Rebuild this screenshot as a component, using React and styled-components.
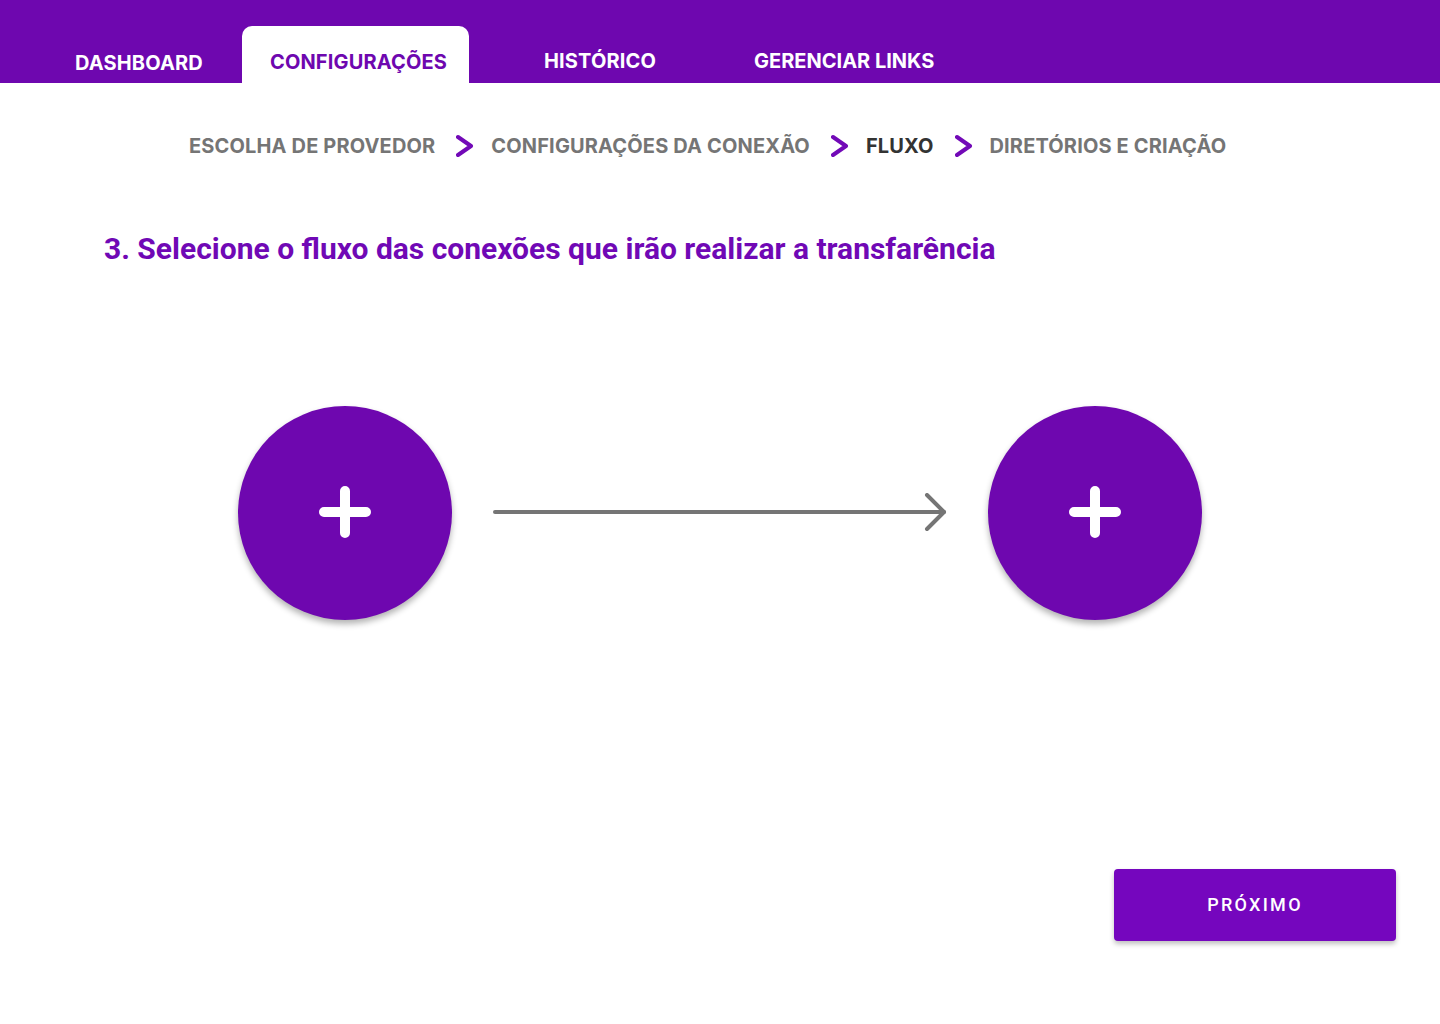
import { Fragment } from "react";
import styled, { createGlobalStyle } from "styled-components";

const GlobalStyle = createGlobalStyle`
  * { box-sizing: border-box; }
  body {
    margin: 0;
    background: #ffffff;
    font-family: "Inter", "Roboto", sans-serif;
  }
`

const Page = styled.div`
  width: 1440px;
  min-height: 1024px;
  background: #fff;
`

const TopBar = styled.nav`
  height: 83px;
  background: #6e07af;
  display: flex;
  align-items: flex-end;
  padding-left: 47px;
`

const Tab = styled.div`
  height: 57px;
  width: ${props => props.$width ? props.$width + "px" : "auto"};
  margin-left: ${props => props.$offset || 0}px;
  padding: ${props => 24 + (props.$shift || 0)}px 28px 0 28px;
  border-radius: 10px 10px 0 0;
  background: ${props => props.$active ? "#ffffff" : "transparent"};
  color: ${props => props.$active ? "#6e07af" : "#ffffff"};
  font-family: "Inter", sans-serif;
  font-weight: 700;
  font-size: 20px;
  line-height: 24px;
  letter-spacing: ${props => props.$tight ? "0" : "0.15px"};
  text-align: center;
  white-space: nowrap;
  cursor: pointer;
`

const Steps = styled.div`
  display: flex;
  align-items: center;
  padding: 51px 0 0 189px;

  svg {
    margin: 0 17px 0 21px;
  }
`

const Step = styled.span`
  font-family: "Inter", sans-serif;
  font-weight: 700;
  font-size: 20px;
  line-height: 24px;
  letter-spacing: 0.15px;
  color: ${props => props.$current ? "#333333" : "#757575"};
  white-space: nowrap;
`

const Title = styled.h1`
  margin: 74px 0 0 104px;
  font-family: "Roboto", sans-serif;
  font-weight: 700;
  font-size: 30px;
  line-height: 34px;
  color: #7008b5;
`

const FlowRow = styled.div`
  display: flex;
  align-items: center;
  gap: 41px;
  margin-top: 140px;
  padding-left: 238px;
`

const AddCircle = styled.button`
  width: 214px;
  height: 214px;
  border-radius: 50%;
  border: none;
  background: #6e07af;
  box-shadow: 0 4px 6px rgba(0, 0, 0, 0.3);
  display: flex;
  align-items: center;
  justify-content: center;
  cursor: pointer;
  padding: 0 0 2px 0;
`

const Footer = styled.div`
  display: flex;
  justify-content: flex-end;
  padding: 249px 44px 0 0;
`

const NextButton = styled.button`
  width: 282px;
  height: 72px;
  border: none;
  border-radius: 4px;
  background: #7506be;
  color: #ffffff;
  font-family: "Roboto", sans-serif;
  font-weight: 500;
  font-size: 18px;
  letter-spacing: 2.3px;
  padding: 0 0 2px 0;
  box-shadow: 0 3px 5px rgba(0, 0, 0, 0.25);
  cursor: pointer;
`

const Chevron = () => (
  <svg width="18" height="24" viewBox="0 0 18 24">
    <path d="M2 3 L15 12 L2 21" fill="none" stroke="#7209b7" strokeWidth="4" strokeLinecap="round" strokeLinejoin="round" />
  </svg>
)

const Plus = () => (
  <svg width="52" height="52" viewBox="0 0 52 52">
    <path d="M26 5 V47 M5 26 H47" stroke="#ffffff" strokeWidth="10" strokeLinecap="round" />
  </svg>
)

const FlowArrow = () => (
  <svg width="454" height="40" viewBox="0 0 454 40">
    <path d="M2 19 H451" stroke="#757575" strokeWidth="4" strokeLinecap="round" />
    <path d="M434 2 L451 19 L434 36" fill="none" stroke="#757575" strokeWidth="4" strokeLinecap="round" strokeLinejoin="round" />
  </svg>
)

const steps = ["ESCOLHA DE PROVEDOR", "CONFIGURAÇÕES DA CONEXÃO", "FLUXO", "DIRETÓRIOS E CRIAÇÃO"]

export default function App() {
  return (
    <Page>
      <GlobalStyle />
      <TopBar>
        <Tab $shift={1}>DASHBOARD</Tab>
        <Tab $active $offset={11} $width={227}>CONFIGURAÇÕES</Tab>
        <Tab $offset={47} $shift={-1}>HISTÓRICO</Tab>
        <Tab $offset={42} $shift={-1} $tight>GERENCIAR LINKS</Tab>
      </TopBar>

      <Steps>
        {steps.map((step, i) => (
          <Fragment key={step}>
            {i > 0 && <Chevron />}
            <Step $current={step === "FLUXO"}>{step}</Step>
          </Fragment>
        ))}
      </Steps>

      <Title>3. Selecione o fluxo das conexões que irão realizar a transfarência</Title>

      <FlowRow>
        <AddCircle type="button"><Plus /></AddCircle>
        <FlowArrow />
        <AddCircle type="button"><Plus /></AddCircle>
      </FlowRow>

      <Footer>
        <NextButton type="button">PRÓXIMO</NextButton>
      </Footer>
    </Page>
  )
}
